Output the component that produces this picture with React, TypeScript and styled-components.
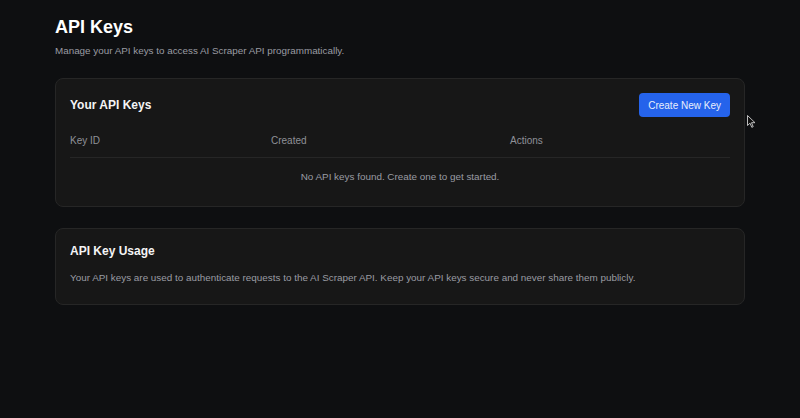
import React from "react";
import styled, { createGlobalStyle } from "styled-components";

const GlobalStyle = createGlobalStyle`
  html, body {
    margin: 0;
    padding: 0;
    background: #0e0f11;
    font-family: "Liberation Sans", Arial, sans-serif;
  }
  * { box-sizing: border-box; }
`;

const Page = styled.div`
  position: relative;
  width: 800px;
  height: 418px;
  padding: 16px 55px 0 55px;
  background: #0e0f11;
  overflow: hidden;
`;

const Title = styled.h1`
  margin: 0;
  color: #ffffff;
  font-size: 18px;
  font-weight: 700;
  line-height: 22px;
`;

const Subtitle = styled.p`
  margin: 6px 0 0;
  color: #9a9ca3;
  font-size: 9.85px;
  line-height: 13px;
`;

const Card = styled.section<{ $top?: number }>`
  margin-top: ${({ $top }) => $top ?? 20}px;
  background: #171717;
  border: 1px solid #262626;
  border-radius: 8px;
  padding: 14px 14px 0;
`;

const CardHeader = styled.div<{ $height?: number }>`
  display: flex;
  align-items: center;
  justify-content: space-between;
  height: ${({ $height }) => $height ?? 24}px;
`;

const CardTitle = styled.h2`
  margin: 0;
  color: #f4f4f5;
  font-size: 12px;
  font-weight: 700;
  line-height: 14px;
`;

const Button = styled.button`
  height: 24px;
  padding: 0 9px;
  border: none;
  border-radius: 4px;
  background: #2563eb;
  color: #e8eefc;
  font-family: inherit;
  font-size: 10px;
  cursor: pointer;
`;

const Table = styled.div`
  margin-top: 6px;
`;

const Row = styled.div`
  display: grid;
  grid-template-columns: 201px 239px 1fr;
  height: 35px;
  align-items: center;
  border-bottom: 1px solid #262626;
`;

const HeadCell = styled.div`
  color: #8f9198;
  font-size: 10px;
`;

const Empty = styled.div`
  height: 36px;
  display: flex;
  align-items: center;
  justify-content: center;
  color: #9a9ca3;
  font-size: 9.9px;
  margin-bottom: 12px;
`;

const Body = styled.p`
  margin: 12px 0 20px;
  color: #9a9ca3;
  font-size: 9.9px;
  line-height: 13px;
`;

const Cursor = styled.svg`
  position: absolute;
  left: 747px;
  top: 115px;
`;

export default function App() {
  return (
    <Page>
      <GlobalStyle />
      <Title>API Keys</Title>
      <Subtitle>Manage your API keys to access AI Scraper API programmatically.</Subtitle>

      <Card $top={21}>
        <CardHeader>
          <CardTitle>Your API Keys</CardTitle>
          <Button>Create New Key</Button>
        </CardHeader>
        <Table>
          <Row>
            <HeadCell>Key ID</HeadCell>
            <HeadCell>Created</HeadCell>
            <HeadCell>Actions</HeadCell>
          </Row>
          <Empty>No API keys found. Create one to get started.</Empty>
        </Table>
      </Card>

      <Card $top={21}>
        <CardHeader $height={16}>
          <CardTitle>API Key Usage</CardTitle>
        </CardHeader>
        <Body>
          Your API keys are used to authenticate requests to the AI Scraper API. Keep your API keys secure and never share them publicly.
        </Body>
      </Card>

      <Cursor width="9" height="13" viewBox="0 0 9 13">
        <path d="M0.5 0.5 L0.5 10.5 L3 8.2 L4.8 12.3 L6.2 11.7 L4.5 7.7 L8 7.7 Z" fill="#111" stroke="#d0d0d0" strokeWidth="0.9" />
      </Cursor>
    </Page>
  );
}
